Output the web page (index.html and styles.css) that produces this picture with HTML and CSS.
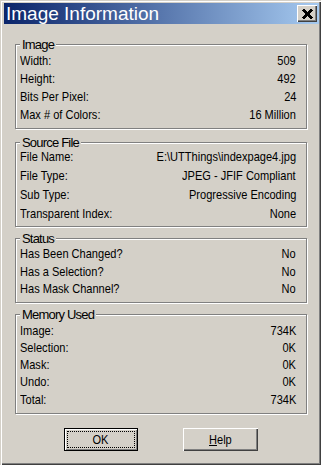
FILE: index.html
```html
<!DOCTYPE html>
<html lang="en">
<head>
    <meta charset="UTF-8">
    <meta name="viewport" content="width=device-width, initial-scale=1.0">
    <link rel="stylesheet" href="styles.css">
    <title>Image Information</title>
</head>
<body>
    <div class="window">
        <div class="titlebar">
            <span class="title">Image Information</span>
            <button class="close" aria-label="Close">
                <svg width="11" height="10" viewBox="0 0 11 10" shape-rendering="crispEdges">
                    <path d="M1 0.5 L10 9.5 M10 0.5 L1 9.5" stroke="#000" stroke-width="2.4" fill="none"/>
                </svg>
            </button>
        </div>

        <fieldset class="group group-image">
            <legend>Image</legend>
            <div class="row"><span>Width:</span><span>509</span></div>
            <div class="row"><span>Height:</span><span>492</span></div>
            <div class="row"><span>Bits Per Pixel:</span><span>24</span></div>
            <div class="row"><span>Max # of Colors:</span><span>16 Million</span></div>
        </fieldset>

        <fieldset class="group group-source">
            <legend>Source File</legend>
            <div class="row"><span>File Name:</span><span>E:\UTThings\indexpage4.jpg</span></div>
            <div class="row"><span>File Type:</span><span>JPEG - JFIF Compliant</span></div>
            <div class="row"><span>Sub Type:</span><span>Progressive Encoding</span></div>
            <div class="row"><span>Transparent Index:</span><span>None</span></div>
        </fieldset>

        <fieldset class="group group-status">
            <legend>Status</legend>
            <div class="row"><span>Has Been Changed?</span><span>No</span></div>
            <div class="row"><span>Has a Selection?</span><span>No</span></div>
            <div class="row"><span>Has Mask Channel?</span><span>No</span></div>
        </fieldset>

        <fieldset class="group group-memory">
            <legend>Memory Used</legend>
            <div class="row"><span>Image:</span><span>734K</span></div>
            <div class="row"><span>Selection:</span><span>0K</span></div>
            <div class="row"><span>Mask:</span><span>0K</span></div>
            <div class="row"><span>Undo:</span><span>0K</span></div>
            <div class="row"><span>Total:</span><span>734K</span></div>
        </fieldset>

        <div class="buttons">
            <button class="btn btn-default"><span class="focus"><span class="label">OK</span></span></button>
            <button class="btn"><span class="focus-none"><span class="label"><u>H</u>elp</span></span></button>
        </div>
    </div>
</body>
</html>
```

FILE: styles.css
```css
body {
    margin: 0;
    background: #d4d0c8;
}

.window {
    width: 321px;
    height: 465px;
    box-sizing: border-box;
    padding: 3px 2px 0 4px;
    background: #d4d0c8;
    box-shadow: inset 1px 1px 0 #d4d0c8, inset 2px 2px 0 #ffffff, inset -1px -1px 0 #404040, inset -2px -2px 0 #808080;
    font-family: "Liberation Sans", Arial, sans-serif;
    font-size: 13px;
    color: #000000;
}

.titlebar {
    display: flex;
    align-items: center;
    justify-content: space-between;
    height: 21px;
    padding: 0 2px 0 2px;
    background: linear-gradient(to right, #0a246a, #a6caf0);
}

.title {
    color: #ffffff;
    font-size: 19px;
    line-height: 21px;
}

.close {
    display: flex;
    align-items: center;
    justify-content: center;
    width: 20px;
    height: 17px;
    padding: 0;
    border: none;
    background: #d4d0c8;
    box-shadow: inset 1px 1px 0 #ffffff, inset -1px -1px 0 #404040, inset -2px -2px 0 #808080;
}

.group {
    margin: 0 12px 0 11px;
    padding: 0 10px 4px 4px;
    min-width: 0;
    border: 1px solid #808080;
    box-shadow: inset 1px 1px 0 #ffffff, 1px 1px 0 #ffffff;
}

/* the dialog font is narrow, Liberation Sans is squeezed to match */
.group legend {
    padding: 0 2px;
    line-height: 9px;
    letter-spacing: -0.8px;
    background: #d4d0c8;
}

.row {
    display: flex;
    justify-content: space-between;
    white-space: nowrap;
}

.row span {
    display: inline-block;
    transform: scaleX(0.85);
    transform-origin: left center;
}

.row span:last-child {
    transform-origin: right center;
}

.group-image {
    margin-top: 16px;
    padding-top: 3px;
}

.group-image .row {
    line-height: 18px;
}

.group-source {
    margin-top: 9px;
    padding-bottom: 3px;
}

.group-source .row {
    line-height: 19px;
}

.group-status {
    margin-top: 7px;
    padding-top: 2px;
}

.group-status .row {
    line-height: 17.5px;
}

.group-memory {
    margin-top: 7px;
    padding-top: 3px;
    padding-bottom: 5px;
}

.group-memory .row {
    line-height: 17.25px;
}

.buttons {
    display: flex;
    justify-content: center;
    gap: 45px;
    margin-top: 14px;
    margin-left: -2px;
}

.btn {
    width: 75px;
    height: 23px;
    padding: 3px;
    border: none;
    background: #d4d0c8;
    box-shadow: inset 1px 1px 0 #ffffff, inset -1px -1px 0 #404040, inset -2px -2px 0 #808080;
    font-family: "Liberation Sans", Arial, sans-serif;
    font-size: 13px;
    color: #000000;
}

.btn-default {
    width: 74px;
    border: 1px solid #000000;
    padding: 2px;
    box-shadow: inset 1px 1px 0 #ffffff, inset -1px -1px 0 #808080;
}

.focus,
.focus-none {
    display: flex;
    align-items: center;
    justify-content: center;
    height: 100%;
    box-sizing: border-box;
    border: 1px dotted transparent;
}

.focus {
    border-color: #000000;
}

.label {
    display: inline-block;
    transform: scaleX(0.85);
}
```
